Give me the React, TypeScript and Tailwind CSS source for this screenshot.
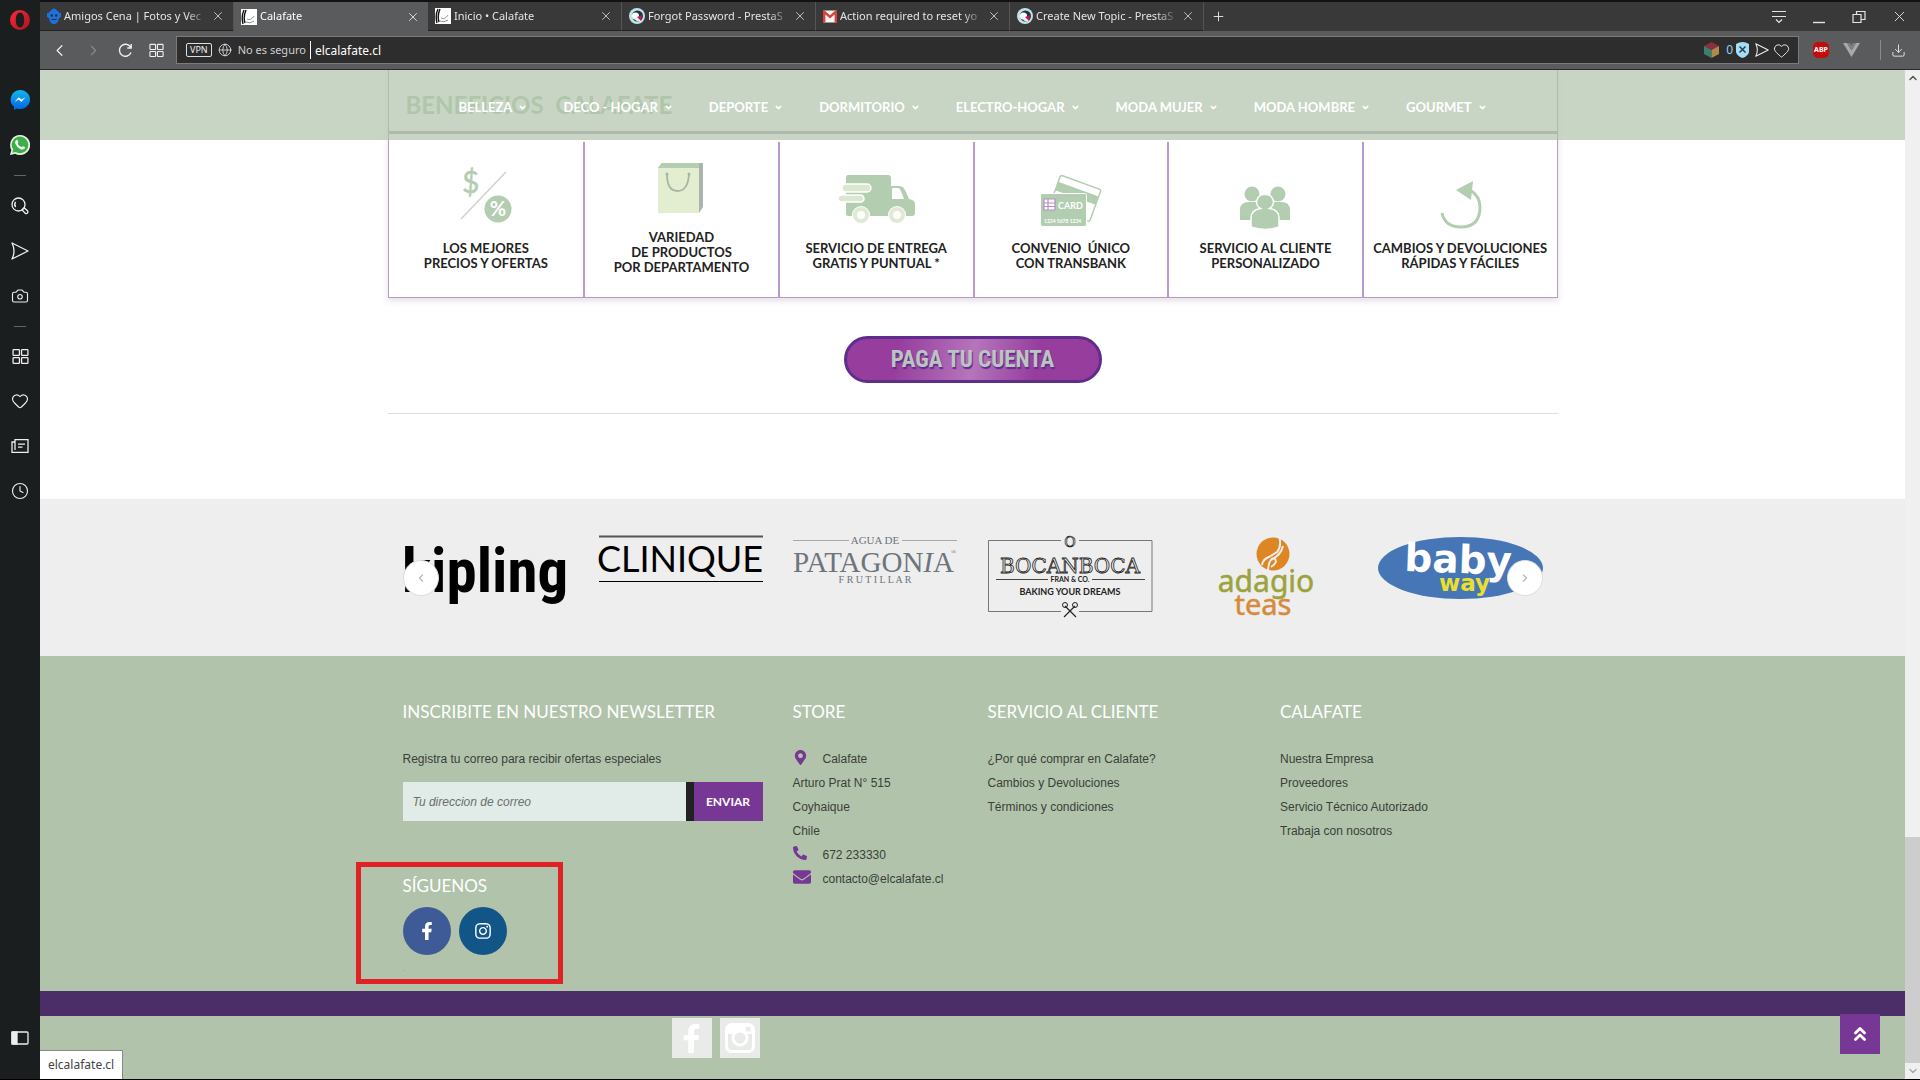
import React from "react";
import {
  Camera,
  ChevronDown,
  ChevronLeft,
  ChevronRight,
  ChevronUp,
  ChevronsUp,
  Clock,
  Download,
  Globe,
  Heart,
  Plus,
  X,
} from "lucide-react";
import { FaEnvelope, FaFacebookF, FaInstagram, FaMapMarkerAlt, FaPhoneAlt } from "react-icons/fa";

const ui = "font-['Noto_Sans','Open_Sans',sans-serif]";
const GREEN = "#b3cdb1";

/* ---------- small drawings ---------- */

function GridIcon({ size = 16 }: { size?: number }) {
  return (
    <svg width={size} height={size} viewBox="0 0 16 16" fill="none" stroke="currentColor" strokeWidth="1.2">
      <rect x="1" y="1.5" width="6" height="5.4" rx="0.6" />
      <rect x="9" y="1.5" width="6" height="5.4" rx="0.6" />
      <rect x="1" y="9" width="6" height="5.4" rx="0.6" />
      <rect x="9" y="9" width="6" height="5.4" rx="0.6" />
    </svg>
  );
}

function SendIcon({ size = 18 }: { size?: number }) {
  return (
    <svg width={size} height={size} viewBox="0 0 18 18" fill="none" stroke="currentColor" strokeWidth="1.3" strokeLinejoin="round">
      <path d="M1 1 17 9 1 17 Q5 9 1 1Z" />
    </svg>
  );
}

function OperaIcon() {
  return (
    <svg width="20" height="20" viewBox="0 0 20 20">
      <defs>
        <linearGradient id="opera" x1="0" y1="0" x2="1" y2="1">
          <stop offset="0" stopColor="#ff2a3c" />
          <stop offset="1" stopColor="#a9121f" />
        </linearGradient>
      </defs>
      <path
        fill="url(#opera)"
        fillRule="evenodd"
        d="M10 0a10 10 0 1 0 0 20a10 10 0 1 0 0-20ZM10 2.6c2.7 0 4.2 3.2 4.2 7.400s-1.500 7.400-4.200 7.400S5.800 14.200 5.800 10s1.500-7.400 4.200-7.400Z"
      />
    </svg>
  );
}

function MessengerIcon() {
  return (
    <svg width="20" height="20" viewBox="0 0 20 20">
      <defs>
        <linearGradient id="msgr" x1="0" y1="0" x2="0" y2="1">
          <stop offset="0" stopColor="#12b5ec" />
          <stop offset="1" stopColor="#0563e6" />
        </linearGradient>
      </defs>
      <path fill="url(#msgr)" d="M10 0a10 9.500 0 1 1-3.200 18.500L4 20v-3.300A9.500 9.500 0 0 1 10 0Z" />
      <path fill="#fff" d="M4.500 12 8.800 7.200l2.500 2.300 4.200-2.300-4.200 4.800-2.500-2.400Z" />
    </svg>
  );
}

function WhatsappIcon() {
  return (
    <svg width="20" height="20" viewBox="0 0 20 20">
      <path fill="#e6f4e6" d="M10 0a10 10 0 1 1-4.800 18.700L0 20l1.400-5A10 10 0 0 1 10 0Z" />
      <path fill="#3fae49" d="M10 1.600a8.300 8.300 0 1 1-4.300 15.400l-3.400.8.900-3.200A8.300 8.300 0 0 1 10 1.600Z" />
      <path
        fill="#fff"
        d="M6.200 5.200c.5-.5 1.100-.4 1.300.1l.8 1.700c.1.400-.7 1.100-.7 1.500.8 1.700 2.100 2.900 3.900 3.600.4 0 .9-1 1.300-.9l1.900.9c.4.300.3 1-.1 1.500-1 1.200-2.500 1.200-4 .6A9.600 9.600 0 0 1 5.500 9c-.6-1.400-.5-2.800.7-3.800Z"
      />
    </svg>
  );
}

function SearchIcon() {
  return (
    <svg width="18" height="18" viewBox="0 0 18 18" fill="none" stroke="currentColor" strokeWidth="1.3">
      <circle cx="7.500" cy="7.500" r="6.500" />
      <path d="M4.700 4.800A4 4 0 0 0 4.700 10" />
      <path d="m11 12.800 3 3.300q1.400 1 2.400 0t0-2.400l-3.300-3z" />
    </svg>
  );
}

function NewsIcon() {
  return (
    <svg width="18" height="18" viewBox="0 0 18 18" fill="none" stroke="currentColor" strokeWidth="1.300">
      <path d="M4 2.700h13v12.600H1V5h3zM4 5v8M7 7.200h7M7 10.200h4.500" />
    </svg>
  );
}

function CalafateFavicon() {
  return (
    <svg width="16" height="16" viewBox="0 0 16 16" className="shrink-0">
      <rect width="16" height="16" fill="#fff" />
      <path d="M3 1Q0 7 2 15M5 1Q2 8 4 14" stroke="#111" strokeWidth="1.400" fill="none" />
      <path d="M6 10q4 2 7-3M5 13q4 2 8-1" stroke="#777" strokeWidth="0.800" fill="none" />
    </svg>
  );
}

function PrestaFavicon() {
  return (
    <svg width="16" height="16" viewBox="0 0 16 16" className="shrink-0">
      <circle cx="8" cy="8" r="8" fill="#bfe3ea" />
      <circle cx="8.500" cy="8" r="5.500" fill="#26323c" />
      <circle cx="6.500" cy="8" r="3.600" fill="#fff" />
      <path d="M4 9q4 6 8 4l-1-3z" fill="#eceff1" />
      <path d="m8 9 5-2-1 6z" fill="#c2185b" />
    </svg>
  );
}

function GmailFavicon() {
  return (
    <svg width="14" height="13" viewBox="0 0 14 13" className="shrink-0">
      <rect width="14" height="12" y="0.500" rx="1" fill="#f4f4f4" />
      <path d="M1.200 12.500V1.800L7 7l5.800-5.200v10.700" fill="none" stroke="#d8433a" strokeWidth="2.400" />
    </svg>
  );
}

function FreepikFavicon() {
  return (
    <svg width="14" height="16" viewBox="0 0 14 16" className="shrink-0" fill="#1c73e0">
      <path d="M4 2.500Q7-1.500 10 2.500L12 4v1h2v4l-2 1q-1 6-5 6T2 10L0 9V5h2V4z" />
      <circle cx="4.800" cy="7.500" r="1.200" fill="#1b2d48" />
      <circle cx="9.200" cy="7.500" r="1.200" fill="#1b2d48" />
      <path d="M4.500 11.500h5" stroke="#1b2d48" strokeWidth="1.200" />
    </svg>
  );
}

/* ---------- browser chrome ---------- */

const tabs = [
  { title: "Amigos Cena | Fotos y Vec", icon: <FreepikFavicon /> },
  { title: "Calafate", icon: <CalafateFavicon />, active: true },
  { title: "Inicio • Calafate", icon: <CalafateFavicon /> },
  { title: "Forgot Password - PrestaS", icon: <PrestaFavicon /> },
  { title: "Action required to reset yo", icon: <GmailFavicon /> },
  { title: "Create New Topic - PrestaS", icon: <PrestaFavicon /> },
];

function TabBar() {
  return (
    <div className="flex h-[31px] border-t-2 border-[#121212] bg-[#39393a] text-[#e4e4e4]">
      {tabs.map((t) => (
        <div
          key={t.title}
          className={
            t.active
              ? "flex w-[194px] items-center gap-[3px] bg-[#5a5b5c] pr-2 pl-[7px] text-white"
              : "flex w-[194px] items-center gap-[3px] border-r border-b border-r-[#555] border-b-[#222] pr-2 pl-[7px]"
          }
        >
          {t.icon}
          <span className="min-w-0 flex-1 overflow-hidden text-[11px] whitespace-nowrap [mask-image:linear-gradient(to_right,#000_85%,transparent)]">
            {t.title}
          </span>
          <button aria-label="Cerrar pestaña">
            <X size={14} strokeWidth={1.3} />
          </button>
        </div>
      ))}
      <button className="px-[7px]" aria-label="Nueva pestaña">
        <Plus size={15} strokeWidth={1.5} />
      </button>
      <div className="ml-auto flex items-center gap-6 pr-3">
        <button aria-label="Menú de pestañas">
          <svg width="16" height="14" viewBox="0 0 16 14" fill="none" stroke="currentColor" strokeWidth="1.200">
            <path d="M1 1.500h14M1 6.500h14M5 9.500l3 3 3-3" />
          </svg>
        </button>
        <button aria-label="Minimizar">
          <svg width="16" height="14" viewBox="0 0 16 14" stroke="currentColor" strokeWidth="1.400">
            <path d="M2 12.500h12" />
          </svg>
        </button>
        <button aria-label="Restaurar">
          <svg width="16" height="14" viewBox="0 0 16 14" fill="none" stroke="currentColor" strokeWidth="1.200">
            <path d="M2 4.500h8v8H2zM5.500 4.500v-3H14v8h-4" />
          </svg>
        </button>
        <button aria-label="Cerrar">
          <X size={17} strokeWidth={1.3} />
        </button>
      </div>
    </div>
  );
}

function Toolbar() {
  return (
    <div className="flex h-[39px] items-center border-b border-[#2a2a2a] bg-[#5a5b5c] text-[#f0f0f0]">
      <div className="flex w-[136px] items-center gap-4 pl-[10px]">
        <button aria-label="Atrás">
          <ChevronLeft size={19} strokeWidth={1.5} />
        </button>
        <button aria-label="Adelante" className="text-[#8b8b8b]">
          <ChevronRight size={17} strokeWidth={1.5} />
        </button>
        <button aria-label="Recargar">
          <svg width="15" height="15" viewBox="0 0 15 15" fill="none" stroke="currentColor" strokeWidth="1.400">
            <path d="M13 9.500A6 6 0 1 1 12.500 4M13.200 1v4H9.300" />
          </svg>
        </button>
        <button aria-label="Acceso rápido">
          <GridIcon size={15} />
        </button>
      </div>
      <div className="flex h-7 flex-1 items-center border border-[#7b7b7b] bg-[#2d2d2d] pr-2 pl-[9px]">
        <span className="rounded-xs border border-[#ddd] px-[3px] text-[9px] leading-3">VPN</span>
        <Globe size={14} strokeWidth={1.3} className="ml-[6px]" />
        <span className="ml-[6px] text-[11px] text-[#d0d0d0]">No es seguro</span>
        <input
          aria-label="Dirección"
          defaultValue="elcalafate.cl"
          className="ml-1 h-[18px] min-w-0 flex-1 border-l border-white bg-transparent pl-1 text-xs text-white outline-none"
        />
        <div className="flex items-center gap-[3px]">
          <svg width="15" height="16" viewBox="0 0 15 16" className="mr-1">
            <path d="M7.500 0 15 4 7.500 8 0 4z" fill="#8b2f3c" />
            <path d="M0 4l7.500 4v8L0 12z" fill="#3c7f72" />
            <path d="M15 4 7.500 8v8l7.500-4z" fill="#b08a4b" />
          </svg>
          <span className="text-xs text-[#8ed1f5]">0</span>
          <svg width="13" height="16" viewBox="0 0 13 16">
            <path d="M0 2Q6.500-2 13 2v8q-1 4-6.500 6Q1 14 0 10z" fill="#a5dcf8" />
            <path d="m3.500 4.500 6 6m0-6-6 6" stroke="#23414f" strokeWidth="1.500" />
          </svg>
          <span className="ml-[3px] flex">
            <SendIcon size={14} />
          </span>
          <Heart size={17} strokeWidth={1.3} className="ml-px" />
        </div>
      </div>
      <div className="flex w-[121px] items-center pl-[14px]">
        <span className="flex h-4 w-4 items-center justify-center rounded-[5px] bg-[#c40c0c] text-[7px] font-bold text-white">ABP</span>
        <svg width="17" height="14" viewBox="0 0 17 14" className="ml-[14px]">
          <path d="M0 0h4l4.500 7.500L13 0h4L8.500 14z" fill="#a9a9a9" />
          <path d="M4 0h3l1.500 2.500L10 0h3L8.500 7.500z" fill="#7f7f7f" />
        </svg>
        <span className="mx-[10px] ml-5 h-5 w-px bg-[#8b8b8b]" />
        <Download size={15} strokeWidth={1.4} />
      </div>
    </div>
  );
}

function SideBar() {
  return (
    <aside className="flex w-10 shrink-0 flex-col items-center bg-[#1b1e1e] pt-[10px] text-[#eee]">
      <OperaIcon />
      <div className="mt-[60px] flex flex-col items-center gap-[25px]">
        <MessengerIcon />
        <WhatsappIcon />
      </div>
      <hr className="mt-5 mb-[21px] w-3 border-[#666]" />
      <div className="flex flex-col items-center gap-[27px]">
        <SearchIcon />
        <SendIcon />
        <Camera size={18} strokeWidth={1.5} />
      </div>
      <hr className="my-[21px] w-3 border-[#666]" />
      <div className="flex flex-col items-center gap-[27px]">
        <GridIcon size={17} />
        <Heart size={18} strokeWidth={1.5} />
        <NewsIcon />
        <Clock size={18} strokeWidth={1.5} />
      </div>
      <svg width="18" height="14" viewBox="0 0 18 14" fill="none" stroke="currentColor" strokeWidth="1.300" className="mt-auto mb-[34px]">
        <rect x="1" y="1" width="16" height="12" rx="1" />
        <rect x="1" y="1" width="5" height="12" fill="currentColor" />
      </svg>
    </aside>
  );
}

/* ---------- page ---------- */

const nav = ["BELLEZA", "DECO - HOGAR", "DEPORTE", "DORMITORIO", "ELECTRO-HOGAR", "MODA MUJER", "MODA HOMBRE", "GOURMET"];

function StickyNav() {
  return (
    <nav className="absolute inset-x-0 top-0 flex h-[70px] justify-center bg-[#b1c3ab]/70 pt-[29px]">
      <ul className="flex gap-9">
        {nav.map((n) => (
          <li key={n}>
            <a href="#" className="flex items-center gap-[6px] font-['Lato',sans-serif] text-[13px] leading-4 font-bold text-white">
              {n}
              <ChevronDown size={9} strokeWidth={4} />
            </a>
          </li>
        ))}
      </ul>
    </nav>
  );
}

const benefits = [
  {
    lines: ["LOS MEJORES", "PRECIOS Y OFERTAS"],
    art: (
      <svg width="52" height="78" viewBox="0 -5 52 78">
        <path d="M1 51 46 4" stroke="#cfd3cf" strokeWidth="1.500" />
        <text x="2" y="25" fontSize="30" fontFamily="Lato, sans-serif" fill={GREEN} stroke={GREEN} strokeWidth="0.500">
          $
        </text>
        <circle cx="38" cy="41" r="13.500" fill={GREEN} />
        <text x="38" y="48" fontSize="20" textAnchor="middle" fontWeight="bold" fontFamily="Lato, sans-serif" fill="#fff">
          %
        </text>
      </svg>
    ),
  },
  {
    lines: ["VARIEDAD", "DE PRODUCTOS", "POR DEPARTAMENTO"],
    art: (
      <svg width="46" height="67" viewBox="0 0 46 67">
        <path d="M4 0h41v44l-4 6V5H0z" fill="#abb5b0" />
        <path d="M4 0h37v6H0z" fill={GREEN} />
        <path d="M0 5h41v45H0z" fill="#e3edcf" />
        <path d="M9 11q0 17 10.500 17T31 11" fill="none" stroke="#a9b5a4" strokeWidth="1.800" />
        <circle cx="9" cy="11" r="1.500" fill="#a9b5a4" />
        <circle cx="31" cy="11" r="1.500" fill="#a9b5a4" />
      </svg>
    ),
  },
  {
    lines: ["SERVICIO DE ENTREGA", "GRATIS Y PUNTUAL *"],
    art: (
      <svg width="78" height="78" viewBox="0 -11 78 78">
        <path fill={GREEN} d="M11 1h40q3 0 3 3v8h8q4 0 6 4l4 9q6 1 6 5v9q0 3-3 3H11q-2 0-2-3V4q0-3 2-3Z" />
        <path fill="#fff" d="M55 14h6q2 0 3 3l3 8H55z" />
        <rect x="5" y="10" width="29" height="8" rx="4" fill="#dbe8cf" stroke="#fff" strokeWidth="1.500" />
        <rect x="1" y="21" width="26" height="7" rx="3.500" fill="#dbe8cf" stroke="#fff" strokeWidth="1.500" />
        <circle cx="24" cy="41" r="9" fill="#fff" />
        <circle cx="60" cy="41" r="9" fill="#fff" />
        <circle cx="24" cy="41" r="6" fill="#fff" stroke="#dfe9d3" strokeWidth="4" />
        <circle cx="60" cy="41" r="6" fill="#fff" stroke="#dfe9d3" strokeWidth="4" />
      </svg>
    ),
  },
  {
    lines: ["CONVENIO  ÚNICO", "CON TRANSBANK"],
    art: (
      <svg width="62" height="78" viewBox="0 -12 62 78">
        <g transform="rotate(20 20 2)">
          <rect x="20" y="0" width="43" height="34" rx="2" fill="#fff" stroke={GREEN} strokeWidth="1.500" />
          <rect x="20" y="7" width="43" height="9" fill={GREEN} />
        </g>
        <rect x="0.500" y="18.500" width="46" height="33" rx="2" fill={GREEN} stroke="#fff" />
        <path d="M4 24h11v11H4zM4 28h11M8 24v11M4 31.500h11" fill="#fff" stroke="#b98cc6" strokeWidth="1.200" />
        <text x="18" y="34" fontSize="9" fontWeight="bold" fontFamily="Lato, sans-serif" fill="#fff">
          CARD
        </text>
        <text x="4" y="48" fontSize="5" fontWeight="bold" fontFamily="Lato, sans-serif" fill="#fff">
          1234 5678 1234
        </text>
      </svg>
    ),
  },
  {
    lines: ["SERVICIO AL CLIENTE", "PERSONALIZADO"],
    art: (
      <svg width="52" height="78" viewBox="0 -23 52 78" fill={GREEN}>
        <circle cx="13" cy="8" r="7.500" />
        <circle cx="39" cy="8" r="7.500" />
        <path d="M1 34V24q0-8 9-8h6q6 0 6 5v13zM51 34V24q0-8-9-8h-6q-6 0-6 5v13z" />
        <path
          d="M26 8.500a7.500 7.500 0 0 1 4.500 14Q40 24 40 32v9q-14 5-28 0v-9q0-8 9.500-9.500A7.500 7.500 0 0 1 26 8.500Z"
          stroke="#fff"
          strokeWidth="1.500"
        />
      </svg>
    ),
  },
  {
    lines: ["CAMBIOS Y DEVOLUCIONES", "RÁPIDAS Y FÁCILES"],
    art: (
      <svg width="44" height="78" viewBox="-2 -17 44 78">
        <path d="M2 33Q5 47 21 47q19 0 19-20 0-11-10-17" fill="none" stroke={GREEN} strokeWidth="3" />
        <path d="M16 10 33 1l-2 19z" fill={GREEN} />
      </svg>
    ),
  },
];

function Benefits() {
  return (
    <section className="border-x border-b border-[#b79cc0] shadow-[0_3px_6px_rgba(120,80,130,0.18)]">
      <h2 className="h-[61px] pt-[17px] pl-[17px] font-['Lato',sans-serif] text-2xl leading-9 font-bold whitespace-pre text-[#b0ccaa]">
        BENEFICIOS  CALAFATE
      </h2>
      <hr className="h-[3px] border-0 bg-[#b1a2b4]" />
      <div className="grid grid-cols-6 pt-2">
        {benefits.map((b) => (
          <div key={b.lines[0]} className="flex h-[155px] flex-col items-center border-l-2 border-[#bd98cc] pt-[21px] first:border-l-0">
            {b.art}
            <p className="text-center font-['Lato',sans-serif] text-[13px] leading-[15px] font-bold whitespace-pre text-[#222]">
              {b.lines.map((l) => (
                <span key={l} className="block">
                  {l}
                </span>
              ))}
            </p>
          </div>
        ))}
      </div>
    </section>
  );
}

const brands = [
  <svg key="kipling" width="165" height="78" viewBox="0 0 165 78" role="img">
    <text x="82" y="57" fontSize="61" fontWeight="bold" textAnchor="middle" fontFamily="'Roboto Condensed', Roboto, sans-serif">
      kipling
    </text>
  </svg>,
  <svg key="clinique" width="165" height="78" viewBox="0 0 165 78" role="img">
    <path d="M1 1.500h164" stroke="#555" strokeWidth="2" />
    <path d="M1 46.500h164" stroke="#000" strokeWidth="1.200" />
    <text x="82" y="37" fontSize="36" textAnchor="middle" fontFamily="Lato, sans-serif">
      CLINIQUE
    </text>
  </svg>,
  <svg key="patagonia" width="165" height="78" viewBox="0 0 165 78" role="img" fill="#6d757c" fontFamily="'Liberation Serif', serif">
    <path d="M0 5.500h56M109 5.500h55" stroke="#a5a9ad" />
    <text x="82" y="9" fontSize="11" textAnchor="middle">
      AGUA DE
    </text>
    <text x="0" y="37" fontSize="29">
      PATAGON<tspan fontStyle="italic">I</tspan>A
    </text>
    <text x="158" y="19" fontSize="7">
      ®
    </text>
    <text x="82" y="48" fontSize="10" textAnchor="middle">
      F R U T I L L A R
    </text>
  </svg>,
  <svg key="bocanboca" width="165" height="84" viewBox="0 0 165 84" role="img" fill="#222" textAnchor="middle">
    <path d="M73 5.500H.5v71H73M91 5.500h73v71H91" fill="none" stroke="#777" />
    <text x="82" y="12" fontSize="14" fontFamily="'DejaVu Serif', serif" fill="#eee" stroke="#222" strokeWidth="0.700">
      O
    </text>
    <text x="82" y="38" fontSize="20" fontFamily="'DejaVu Serif', serif" fill="#eee" stroke="#222" strokeWidth="0.800">
      BOCANBOCA
    </text>
    <path d="M8 44.500h52M104 44.500h53" stroke="#444" strokeWidth="1.200" />
    <text x="82" y="47" fontSize="7" fontWeight="bold" fontFamily="Lato, sans-serif">
      FRAN &amp; CO.
    </text>
    <text x="82" y="60" fontSize="9" fontWeight="bold" fontFamily="Lato, sans-serif">
      BAKING YOUR DREAMS
    </text>
    <path d="M76 82l11-11M88 82 77 71" stroke="#222" strokeWidth="1.200" />
    <circle cx="77" cy="70" r="2.500" fill="none" stroke="#222" />
    <circle cx="87" cy="70" r="2.500" fill="none" stroke="#222" />
  </svg>,
  <svg key="adagio" width="165" height="84" viewBox="0 0 165 84" role="img" fontFamily="'Noto Sans', sans-serif" textAnchor="middle">
    <circle cx="90" cy="19" r="16.500" fill="#dd8724" />
    <path d="M96 1q3 10-2 16l-8 5q-6 2-7 8M100 11q-2 9-12 14M85 38q0-14 6-15 5 4-3 9" fill="none" stroke="#eee" strokeWidth="2" />
    <text x="83" y="57" fontSize="30" fill="#9da33c" stroke="#9da33c" strokeWidth="0.500">
      adagio
    </text>
    <text x="80" y="80" fontSize="29" fill="#d8893a" stroke="#d8893a" strokeWidth="0.500">
      teas
    </text>
  </svg>,
  <svg key="babyway" width="165" height="84" viewBox="0 0 165 84" role="img" fontFamily="'DejaVu Sans', sans-serif" fontWeight="bold">
    <ellipse cx="82.500" cy="33" rx="82.500" ry="31" fill="#4676b5" />
    <text x="26" y="36" fontSize="39" fill="#fff" transform="rotate(2 26 36)">
      baby
    </text>
    <text x="61" y="56" fontSize="23" fill="#eadf2f">
      way
    </text>
  </svg>,
];

function Brands() {
  return (
    <section className="bg-[#eeeeee] pt-9 pb-[37px]">
      <div className="relative mx-auto grid h-[84px] max-w-[1170px] grid-cols-6">
        {brands.map((b) => (
          <a key={b.key} href="#" aria-label={String(b.key)} className="px-[15px]">
            {b}
          </a>
        ))}
        <button
          aria-label="Anterior"
          className="absolute top-[25px] left-[15px] flex h-9 w-9 items-center justify-center rounded-full border border-[#ddd] bg-white text-[#bbb]"
        >
          <ChevronLeft size={12} strokeWidth={3} />
        </button>
        <button
          aria-label="Siguiente"
          className="absolute top-[25px] right-[15px] flex h-9 w-9 items-center justify-center rounded-full border border-[#ddd] bg-white text-[#bbb]"
        >
          <ChevronRight size={12} strokeWidth={3} />
        </button>
      </div>
    </section>
  );
}

function FooterHeading({ children }: { children: React.ReactNode }) {
  return <h3 className="font-['Lato',sans-serif] text-[17px] leading-6 text-white">{children}</h3>;
}

function LinkList({ items }: { items: string[] }) {
  return (
    <ul className="mt-[23px]">
      {items.map((i) => (
        <li key={i}>
          <a href="#">{i}</a>
        </li>
      ))}
    </ul>
  );
}

function ContactLine({ icon, children }: { icon: React.ReactNode; children: React.ReactNode }) {
  return (
    <p className="flex items-center">
      <span className="w-[30px] pb-1 text-[#773795]">{icon}</span>
      {children}
    </p>
  );
}

function Footer() {
  return (
    <footer className="font-['Liberation_Sans',Arial,sans-serif] text-xs leading-6 text-[#3a3f39]">
      <div className="mx-auto grid h-[335px] max-w-[1170px] grid-cols-12 pt-[44px]">
        <div className="col-span-4 px-[15px]">
          <FooterHeading>INSCRIBITE EN NUESTRO NEWSLETTER</FooterHeading>
          <label htmlFor="mail" className="mt-[23px] block">
            Registra tu correo para recibir ofertas especiales
          </label>
          <form className="mt-[11px] flex h-[39px]" onSubmit={(e) => e.preventDefault()}>
            <input
              id="mail"
              type="email"
              placeholder="Tu direccion de correo"
              className="min-w-0 flex-1 bg-[#e1ebe7] px-[10px] italic outline-none placeholder:text-[#6a706c]"
            />
            <button className="w-[77px] border-l-8 border-[#222] bg-[#773795] font-['Lato',sans-serif] text-xs font-bold text-white">ENVIAR</button>
          </form>
          <div className="relative mt-[53px]">
            <div className="pointer-events-none absolute -top-3 -left-[47px] h-[122px] w-[207px] border-[5px] border-[#e02227]" />
            <FooterHeading>SÍGUENOS</FooterHeading>
            <div className="mt-[9px] flex gap-2 text-white">
              <a href="#" aria-label="Facebook" className="flex h-12 w-12 items-center justify-center rounded-full bg-[#3e5b98]">
                <FaFacebookF size={18} />
              </a>
              <a href="#" aria-label="Instagram" className="flex h-12 w-12 items-center justify-center rounded-full bg-[#125688]">
                <FaInstagram size={18} />
              </a>
            </div>
            <p className="text-[8px] leading-7 text-[#8b9a86]">.</p>
          </div>
        </div>
        <div className="col-span-2 px-[15px]">
          <FooterHeading>STORE</FooterHeading>
          <address className="mt-[23px] whitespace-nowrap not-italic">
            <ContactLine icon={<FaMapMarkerAlt size={15} />}>Calafate</ContactLine>
            <p>Arturo Prat N° 515</p>
            <p>Coyhaique</p>
            <p>Chile</p>
            <ContactLine icon={<FaPhoneAlt size={14} className="-scale-x-100 rotate-90" />}>672 233330</ContactLine>
            <ContactLine icon={<FaEnvelope size={18} />}>contacto@elcalafate.cl</ContactLine>
          </address>
        </div>
        <div className="col-span-3 px-[15px]">
          <FooterHeading>SERVICIO AL CLIENTE</FooterHeading>
          <LinkList items={["¿Por qué comprar en Calafate?", "Cambios y Devoluciones", "Términos y condiciones"]} />
        </div>
        <div className="col-span-3 px-[15px]">
          <FooterHeading>CALAFATE</FooterHeading>
          <LinkList items={["Nuestra Empresa", "Proveedores", "Servicio Técnico Autorizado", "Trabaja con nosotros"]} />
        </div>
      </div>
      <div className="h-[25px] bg-[#4b2e67]" />
      <div className="mx-auto flex max-w-[1170px] gap-2 pt-[2px] pl-[284px]">
        <a href="#" aria-label="Facebook" className="flex h-10 w-10 items-end justify-center bg-[#e9ebe9] pb-[5px] text-white">
          <FaFacebookF size={29} />
        </a>
        <a href="#" aria-label="Instagram" className="flex h-10 w-10 items-center justify-center bg-[#e9ebe9]">
          <svg width="30" height="30" viewBox="0 0 30 30">
            <rect x="1.500" y="1.500" width="27" height="27" rx="5" fill="none" stroke="#fff" strokeWidth="3" />
            <path d="M2 3h26v8H2z" fill="#fff" />
            <circle cx="15" cy="15" r="7" fill="#e9ebe9" stroke="#fff" strokeWidth="3" />
            <rect x="21" y="4" width="4.500" height="4.500" fill="#e9ebe9" />
          </svg>
        </a>
      </div>
    </footer>
  );
}

export default function App() {
  return (
    <div className={`flex h-screen border-b border-black bg-[#b1c3ab] ${ui}`}>
      <SideBar />
      <div className="flex min-w-0 flex-1 flex-col">
        <TabBar />
        <Toolbar />
        <div className="flex min-h-0 flex-1">
          <main className="relative min-w-0 flex-1 overflow-hidden">
            <div className="bg-white pb-[85px]">
              <div className="mx-auto max-w-[1170px]">
                <Benefits />
                <div className="flex justify-center border-b border-[#ddd] pt-[38px] pb-[30px]">
                  <button className="h-[47px] w-[258px] rounded-full border-[3px] border-[#5f2d8c] bg-[linear-gradient(100deg,#963d9e_20%,#b575bb_50%,#963d9e_75%)] font-['Roboto_Condensed','Roboto',sans-serif] text-[23px] leading-8 font-bold text-[#b9c6c0] [text-shadow:1px_2px_1px_#5f2d8c]">
                    PAGA TU CUENTA
                  </button>
                </div>
              </div>
            </div>
            <Brands />
            <Footer />
            <StickyNav />
            <button aria-label="Volver arriba" className="absolute right-[25px] bottom-[25px] flex h-10 w-10 items-center justify-center bg-[#773795] text-white">
              <ChevronsUp size={22} strokeWidth={3} />
            </button>
            <div className="absolute bottom-0 left-0 border-t border-r border-[#888] bg-white px-2 py-1 text-xs leading-5 text-[#444]">elcalafate.cl</div>
          </main>
          <div className="flex w-[15px] shrink-0 flex-col items-center bg-[#f0f0f0] text-[#555]">
            <ChevronUp size={12} strokeWidth={3} className="mt-[2px]" />
            <div className="mt-auto h-[226px] w-full bg-[#cdcdcd]" />
            <ChevronDown size={12} strokeWidth={3} className="my-[2px] text-[#aaa]" />
          </div>
        </div>
      </div>
    </div>
  );
}
